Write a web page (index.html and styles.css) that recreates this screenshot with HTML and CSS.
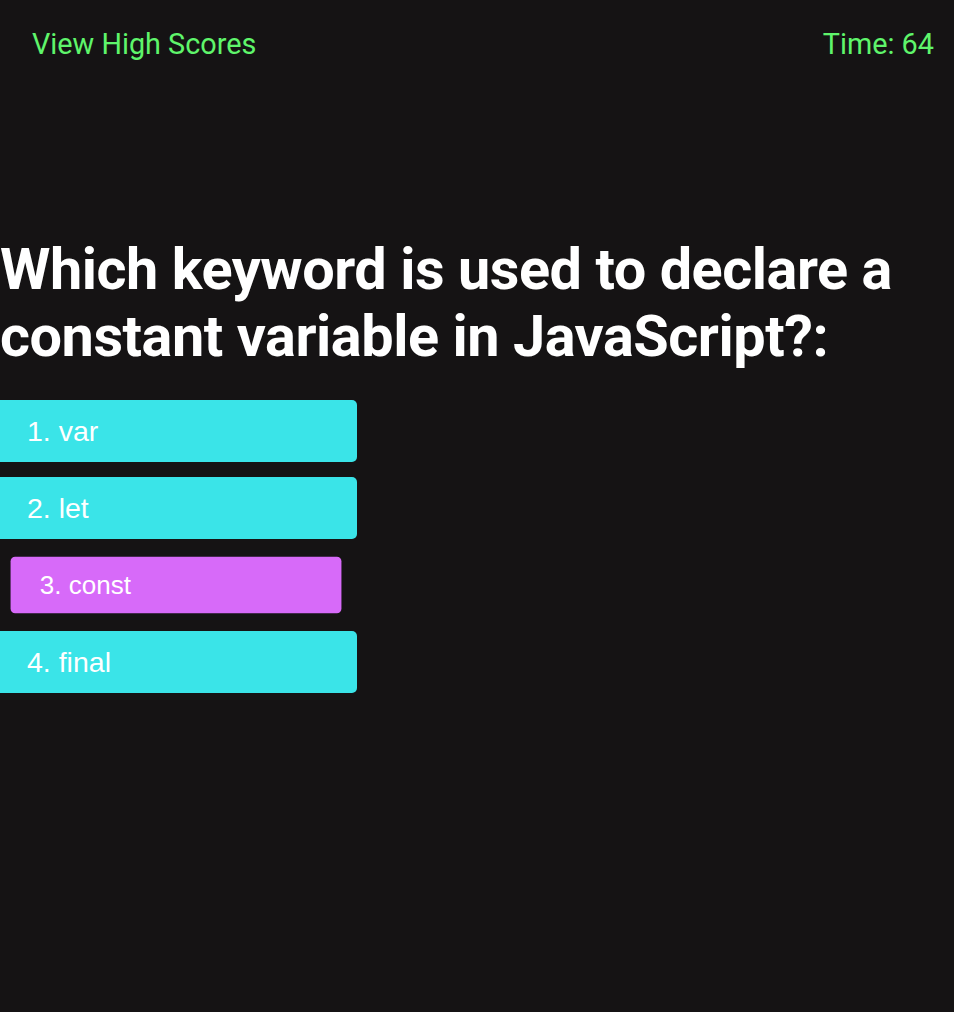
FILE: index.html
```html
<!DOCTYPE html>
<html lang="en">
<head>
<meta charset="utf-8">
<title>Code Quiz</title>
<link rel="stylesheet" href="styles.css">
</head>
<body>
<header class="top-bar">
  <a class="scores-link" href="#">View High Scores</a>
  <div class="timer">Time: 64</div>
</header>
<main class="quiz">
  <h1 class="question">Which keyword is used to declare a constant variable in JavaScript?:</h1>
  <div class="choices">
    <button class="choice">1. var</button>
    <button class="choice">2. let</button>
    <button class="choice choice-active">3. const</button>
    <button class="choice">4. final</button>
  </div>
</main>
</body>
</html>
```
FILE: styles.css
```css
html, body {
  margin: 0;
  padding: 0;
  background: #151314;
  height: 100%;
}
body {
  font-family: Roboto, "Liberation Sans", sans-serif;
  color: #ffffff;
  overflow: hidden;
}
.top-bar {
  display: flex;
  justify-content: space-between;
  align-items: flex-start;
  padding: 26.5px 20px 0 32px;
}
.scores-link, .timer {
  font-family: Roboto, sans-serif;
  font-size: 28.8px;
  color: #5ff56b;
  text-decoration: none;
  line-height: normal;
}
.quiz {
  padding-top: 175px;
}
.question {
  margin: 0;
  font-family: Roboto, sans-serif;
  font-weight: 700;
  font-size: 57.6px;
  letter-spacing: -0.45px;
  line-height: normal;
  color: #ffffff;
}
.choices {
  display: flex;
  flex-direction: column;
  align-items: flex-start;
  gap: 15px;
  margin-top: 30.5px;
}
.choice {
  display: block;
  box-sizing: border-box;
  width: 362px;
  height: 62px;
  margin-left: -5px;
  padding: 0 0 0 32px;
  border: none;
  border-radius: 5px;
  background: #3ae4e8;
  color: #ffffff;
  font-family: "Liberation Sans", Arial, sans-serif;
  font-size: 28.5px;
  text-align: left;
  cursor: pointer;
}
.choice-active {
  background: #d76af9;
  transform: scale(0.914);
}
```
